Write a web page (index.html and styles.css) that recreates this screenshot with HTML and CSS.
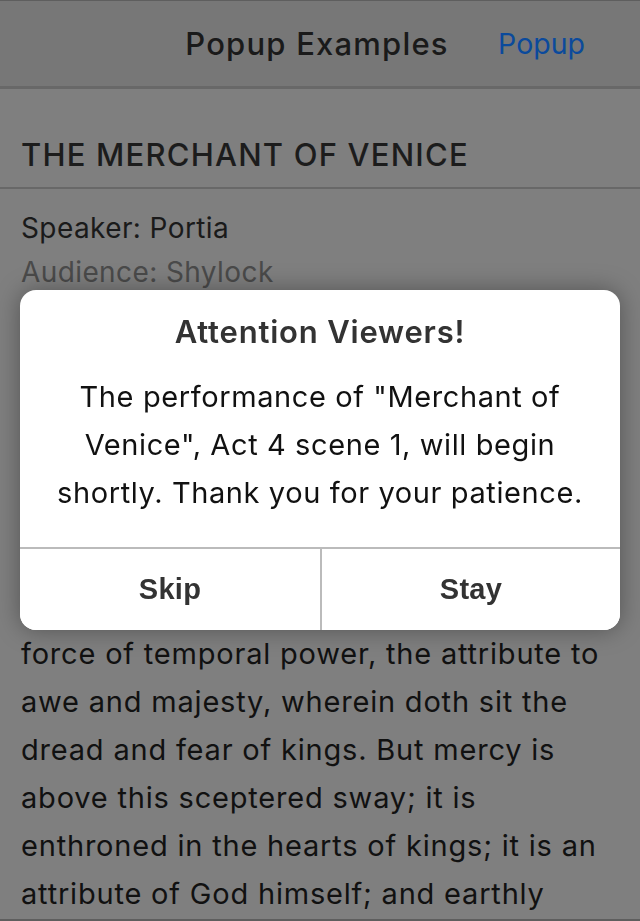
FILE: index.html
```html
<!DOCTYPE html>
<html lang="en">
<head>
<meta charset="utf-8">
<title>Popup Examples</title>
<link rel="stylesheet" href="styles.css">
</head>
<body>
<div class="app">
  <header class="topbar">
    <div class="topbar-side"></div>
    <h1 class="topbar-title">Popup Examples</h1>
    <div class="topbar-side topbar-right"><a class="topbar-link" href="#">Popup</a></div>
  </header>
  <main class="content">
    <h2 class="play-title">THE MERCHANT OF VENICE</h2>
    <div class="speech">
      <p class="meta">Speaker: Portia</p>
      <p class="meta meta-muted">Audience: Shylock</p>
      <p class="speech-text speech-hidden">The quality of mercy is not strained; it droppeth as the gentle rain from heaven upon the place beneath. It is twice blest; it blesseth him that gives and him that takes. 'Tis mightiest in the mightiest; it becomes the throned monarch better than his crown. His sceptre shows the</p>
      <p class="speech-text">force of temporal power, the attribute to awe and majesty, wherein doth sit the dread and fear of kings. But mercy is above this sceptered sway; it is enthroned in the hearts of kings; it is an attribute of God himself; and earthly power doth then show likest God's when mercy seasons justice.</p>
    </div>
  </main>
  <footer class="bottombar"></footer>
</div>

<div class="backdrop">
  <div class="dialog" role="dialog" aria-labelledby="dlg-title">
    <div class="dialog-body">
      <h3 class="dialog-title" id="dlg-title">Attention Viewers!</h3>
      <p class="dialog-message">The performance of "Merchant of Venice", Act 4 scene 1, will begin shortly. Thank you for your patience.</p>
    </div>
    <div class="dialog-actions">
      <button class="dialog-btn" type="button">Skip</button>
      <button class="dialog-btn" type="button">Stay</button>
    </div>
  </div>
</div>
</body>
</html>
```
FILE: styles.css
```css
* { box-sizing: border-box; }
html, body { margin: 0; padding: 0; }
body {
  font-family: Inter, "Liberation Sans", sans-serif;
  background: #7f7f7f;
  color: #1a1a1a;
  height: 100vh;
  overflow: hidden;
}
.app {
  height: 100vh;
  display: flex;
  flex-direction: column;
}
.topbar {
  flex: none;
  height: 89px;
  background: #777777;
  border-top: 1px solid #5e5e5e;
  border-bottom: 3px solid #686868;
  display: grid;
  grid-template-columns: 1fr auto 1fr;
  align-items: center;
}
.topbar-title {
  margin: 0;
  font-size: 31px;
  font-weight: 500;
  letter-spacing: 1.2px;
  color: #1a1a1a;
  padding-right: 6px;
}
.topbar-right {
  display: flex;
  justify-content: flex-end;
  padding-right: 55px;
}
.topbar-link {
  font-size: 28.5px;
  color: #0b4a9c;
  text-decoration: none;
}
.content {
  flex: 1;
  overflow: hidden;
}
.play-title {
  margin: 46px 0 0;
  padding: 0 21px 12px;
  font-size: 31px;
  line-height: 40px;
  font-weight: 500;
  letter-spacing: 1.2px;
  color: #1c1c1c;
  border-bottom: 2px solid #686868;
}
.speech {
  padding: 17px 21px 0;
}
.meta {
  margin: 0;
  font-size: 28px;
  line-height: 44px;
  letter-spacing: 0.4px;
  color: #1a1a1a;
}
.meta-muted { color: #4a4a4a; }
.speech-text {
  margin: 0;
  font-size: 29px;
  line-height: 48px;
  letter-spacing: 0.8px;
  color: #111;
}
.speech-hidden {
  height: 336px;
  overflow: hidden;
}
.bottombar {
  flex: none;
  height: 2px;
  background: #5e5e5e;
}
.backdrop {
  position: fixed;
  inset: 0;
  display: flex;
  justify-content: center;
  align-items: flex-start;
  padding-top: 290px;
}
.dialog {
  width: 600px;
  background: #fff;
  border-radius: 16px;
  box-shadow: 0 0 24px rgba(0, 0, 0, 0.35);
  overflow: hidden;
}
.dialog-body {
  padding: 20px 30px 30px;
  text-align: center;
  border-bottom: 2px solid #bbbbbb;
}
.dialog-title {
  margin: 0;
  font-size: 31px;
  line-height: 44px;
  font-weight: 600;
  letter-spacing: 0.8px;
  color: #333;
}
.dialog-message {
  margin: 19px 0 0;
  font-size: 29px;
  line-height: 48px;
  letter-spacing: 0.6px;
  color: #111;
}
.dialog-actions {
  display: grid;
  grid-template-columns: 1fr 1fr;
  height: 81px;
}
.dialog-btn {
  border: 0;
  background: #fff;
  font-family: "Liberation Sans", Arial, sans-serif;
  font-weight: 700;
  font-size: 29px;
  letter-spacing: 0.3px;
  color: #333;
  padding: 0;
}
.dialog-btn + .dialog-btn { border-left: 2px solid #bbbbbb; }
```
